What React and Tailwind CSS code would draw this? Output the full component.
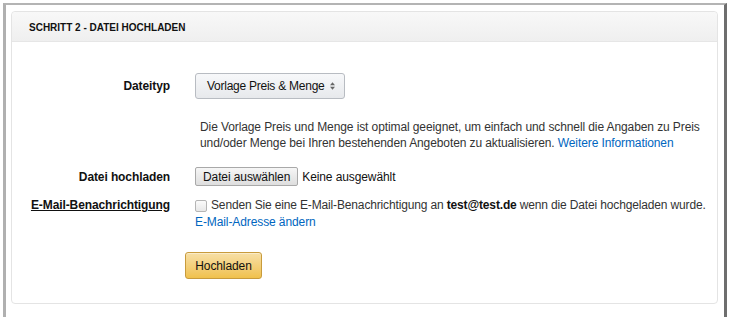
import React from "react";

const FONT = { fontFamily: '"Liberation Sans", Arial, sans-serif' };

const UploadStep = () => {
  return (
    <div className="w-[732px] h-[317px] bg-white overflow-hidden" style={FONT}>
      {/* Outer frame */}
      <div className="ml-[3px] mt-[3px] w-[724px] h-[314px] border-t-2 border-l-[3px] border-r-[3px] border-t-[#b4b4b4] border-l-[#b0b0b0] border-r-[#6e6e6e] pl-[5px] pr-[6px] pt-[6px]">
        {/* Card */}
        <div className="h-[293px] border border-[#e4e4e4] rounded-[4px] bg-white">
          {/* Header */}
          <div className="h-[30px] flex items-center pl-[17px] pt-[1px] bg-gradient-to-b from-[#f8f8f8] to-[#efefef] border-b border-[#e6e6e6] rounded-t-[4px]">
            <h3 className="text-[10px] font-bold text-[#111] uppercase">
              Schritt 2 - Datei hochladen
            </h3>
          </div>

          {/* Body */}
          <div className="pt-[31px] text-[12px] tracking-[-0.1px] text-[#333]">
            {/* Dateityp */}
            <div className="flex items-center">
              <div className="w-[158px] text-right font-bold text-[#111]">Dateityp</div>
              <div className="ml-[25px]">
                <button className="h-[26px] w-[150px] flex items-center pl-[11px] pr-[9px] border border-[#b8bcc2] rounded-[3px] bg-gradient-to-b from-[#f7f8fa] to-[#e7e9ec] text-[#111] text-[12px] tracking-[-0.25px]">
                  <span className="flex-1 text-left whitespace-nowrap">Vorlage Preis &amp; Menge</span>
                  <svg width="5" height="8" viewBox="0 0 6 9" className="text-[#666]">
                    <path d="M3 0 L6 3.5 H0 Z M3 9 L6 5.5 H0 Z" fill="currentColor" />
                  </svg>
                </button>
              </div>
            </div>

            {/* Description */}
            <div className="ml-[188px] w-[505px] mt-[20px] leading-[16px]">
              Die Vorlage Preis und Menge ist optimal geeignet, um einfach und schnell die Angaben zu Preis
              und/oder Menge bei Ihren bestehenden Angeboten zu aktualisieren.{" "}
              <a className="text-[#0066c0]">Weitere Informationen</a>
            </div>

            {/* Datei hochladen */}
            <div className="flex items-center mt-[16px]">
              <div className="w-[158px] text-right font-bold text-[#111]">Datei hochladen</div>
              <div className="ml-[25px] flex items-center">
                <button className="h-[19px] px-[7px] border border-[#a9a9a9] rounded-[2px] bg-gradient-to-b from-[#f6f6f6] to-[#dedede] text-[12px] tracking-[-0.1px] text-[#111] leading-none">
                  Datei auswählen
                </button>
                <span className="ml-[4px] text-[#111]">Keine ausgewählt</span>
              </div>
            </div>

            {/* E-Mail */}
            <div className="flex mt-[11px] leading-[17px]">
              <div className="w-[158px] text-right font-bold text-[#111] underline whitespace-nowrap">
                E-Mail-Benachrichtigung
              </div>
              <div className="ml-[25px]">
                <div className="flex items-center">
                  <span className="w-[12px] h-[12px] shrink-0 border border-[#b5b5b5] rounded-[2px] bg-gradient-to-b from-[#fbfbfb] to-[#e8e8e8]" />
                  <span className="ml-[4px] whitespace-nowrap tracking-[-0.15px]">
                    Senden Sie eine E-Mail-Benachrichtigung an <b className="text-[#111]">test@test.de</b> wenn die Datei hochgeladen wurde.
                  </span>
                </div>
                <a className="text-[#0066c0]">E-Mail-Adresse ändern</a>
              </div>
            </div>

            {/* Submit */}
            <div className="pl-[173px] mt-[21px]">
              <button className="h-[27px] w-[77px] border border-[#c89b3c] rounded-[3px] bg-gradient-to-b from-[#f7dfa5] to-[#f0c14b] text-[12px] text-[#111] shadow-[0_1px_0_rgba(255,255,255,0.4)_inset]">
                Hochladen
              </button>
            </div>
          </div>
        </div>
      </div>
    </div>
  );
};

export default function App() {
  return <UploadStep />;
}
